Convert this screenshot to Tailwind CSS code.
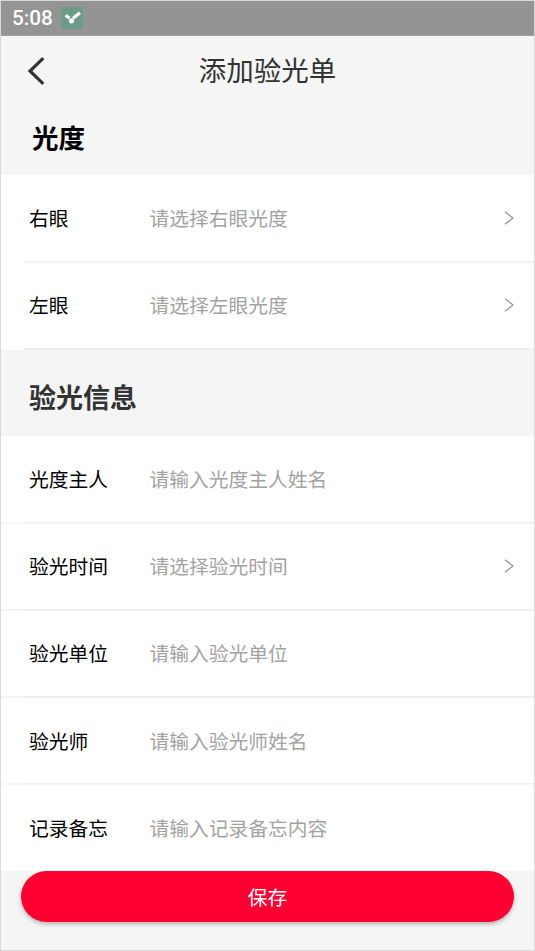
<!DOCTYPE html>
<html lang="zh-CN">
<head>
<meta charset="utf-8">
<title>添加验光单</title>
<script src="https://cdn.jsdelivr.net/npm/@tailwindcss/browser@4"></script>
</head>
<body class="w-[535px] h-[951px] overflow-hidden font-['Noto_Sans_CJK_SC',sans-serif]">
<div class="w-[535px] h-[951px] border border-[#d8d8d8] bg-[#f5f5f5] flex flex-col text-[19.75px] text-black">
  <div class="h-[35px] shrink-0 bg-[#949494] border-b border-[#a0a0a0] flex items-center pl-[11px] gap-[8px]">
    <span class="font-[Roboto,sans-serif] font-medium text-[20.8px] leading-none text-white w-[41px] pt-px whitespace-nowrap">5:08</span>
    <svg width="22" height="22" viewBox="0 0 22 22"><rect width="22" height="22" rx="2" fill="#6a9c89"/><path d="M4.6 8.2l3.9 3M12 11.3l7-5.6" stroke="#fff" stroke-width="3.1" fill="none"/><circle cx="10.5" cy="13.8" r="2.6" fill="#fff"/></svg>
  </div>
  <header class="h-[70px] shrink-0 grid grid-cols-[60px_1fr_60px] items-center">
    <svg class="ml-[26px]" width="18" height="30" viewBox="0 0 18 30" fill="none" stroke="#333" stroke-width="3.2"><path d="M16.3 2.2L3 15l13.3 12.8"/></svg>
    <h1 class="text-center text-[27.5px] leading-[40px] text-[#333] pb-[5px]">添加验光单</h1>
  </header>
  <h2 class="h-[69px] shrink-0 pl-[31px] pt-[11px] text-[26.5px] leading-[40px] font-bold">光度</h2>
  <section class="shrink-0 bg-white">
    <div class="h-[88px] flex flex-col">
      <div class="flex-1 flex items-center pl-[28px] pr-[20px] pb-px"><span class="w-[120.5px]">右眼</span><span class="flex-1 text-[#a3a3a3]">请选择右眼光度</span><svg width="10" height="14" viewBox="0 0 10 14" fill="none" stroke="#999" stroke-width="1.3"><path d="M1 .8L9 7 1 13.2"/></svg></div>
      <div class="ml-[23px] h-[2px] bg-[#f2f2f2]"></div>
    </div>
    <div class="h-[87px] flex flex-col">
      <div class="flex-1 flex items-center pl-[28px] pr-[20px] pb-[2px]"><span class="w-[120.5px]">左眼</span><span class="flex-1 text-[#a3a3a3]">请选择左眼光度</span><svg width="10" height="14" viewBox="0 0 10 14" fill="none" stroke="#999" stroke-width="1.3"><path d="M1 .8L9 7 1 13.2"/></svg></div>
      <div class="ml-[23px] h-[2px] bg-[#f0f0f0]"></div>
    </div>
  </section>
  <h2 class="h-[86px] shrink-0 pl-[28px] pt-[27px] text-[27px] leading-[40px] font-bold text-[#333]">验光信息</h2>
  <section class="shrink-0 bg-white">
    <div class="h-[88px] flex flex-col">
      <div class="flex-1 flex items-center pl-[28px] pb-px"><span class="w-[120.5px]">光度主人</span><span class="text-[#a3a3a3]">请输入光度主人姓名</span></div>
      <div class="h-[2px] bg-[#f7f7f7] pl-[23px]"><div class="h-px bg-[#efefef]"></div></div>
    </div>
    <div class="h-[87px] flex flex-col">
      <div class="flex-1 flex items-center pl-[28px] pr-[20px] pb-[2px]"><span class="w-[120.5px]">验光时间</span><span class="flex-1 text-[#a3a3a3]">请选择验光时间</span><svg width="10" height="14" viewBox="0 0 10 14" fill="none" stroke="#999" stroke-width="1.3"><path d="M1 .8L9 7 1 13.2"/></svg></div>
      <div class="h-[2px] bg-[#f5f5f5] pl-[23px]"><div class="h-[2px] bg-[#f0f0f0]"></div></div>
    </div>
    <div class="h-[87px] flex flex-col">
      <div class="flex-1 flex items-center pl-[28px] pb-px"><span class="w-[120.5px]">验光单位</span><span class="text-[#a3a3a3]">请输入验光单位</span></div>
      <div class="h-[2px] bg-[#f5f5f5] pl-[23px]"><div class="h-[2px] bg-[#f0f0f0]"></div></div>
    </div>
    <div class="h-[87px] flex flex-col">
      <div class="flex-1 flex items-center pl-[28px]"><span class="w-[120.5px]">验光师</span><span class="text-[#a3a3a3]">请输入验光师姓名</span></div>
      <div class="h-[2px] bg-[#f7f7f7] pl-[23px]"><div class="h-px bg-[#efefef]"></div></div>
    </div>
    <div class="h-[86px] flex items-center pl-[28px]"><span class="w-[120.5px]">记录备忘</span><span class="text-[#a3a3a3]">请输入记录备忘内容</span></div>
  </section>
  <button class="mx-[20px] h-[51px] shrink-0 rounded-full bg-[#ff0033] text-white shadow-[0_2px_4px_rgba(0,0,0,0.28)]">保存</button>
</div>
</body>
</html>
